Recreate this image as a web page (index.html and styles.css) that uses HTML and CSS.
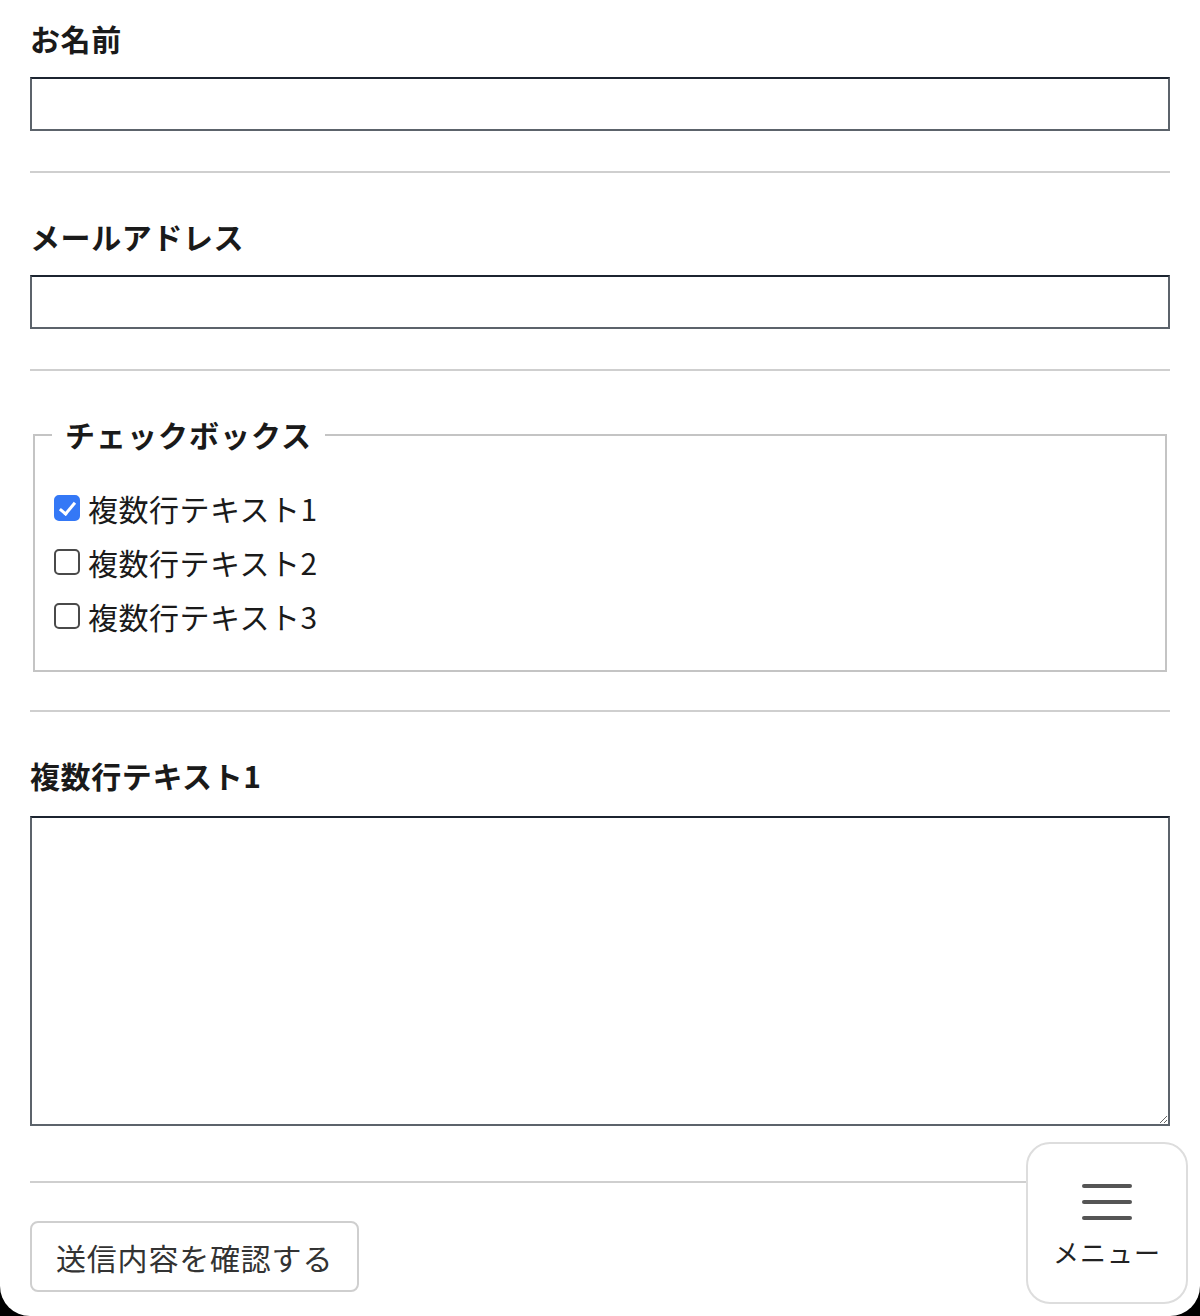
FILE: index.html
```html
<!DOCTYPE html>
<html lang="ja">
<head>
    <meta charset="UTF-8">
    <meta name="viewport" content="width=device-width, initial-scale=1.0">
    <title>お問い合わせ</title>
    <link rel="stylesheet" href="styles.css">
</head>
<body>
    <div class="page">
        <form class="contact-form">
            <div class="field">
                <label class="field-label" for="name">お名前</label>
                <input class="text-input" id="name" type="text">
            </div>
            <hr class="divider">
            <div class="field">
                <label class="field-label" for="mail">メールアドレス</label>
                <input class="text-input" id="mail" type="email">
            </div>
            <hr class="divider">
            <fieldset class="check-group">
                <legend>チェックボックス</legend>
                <label class="check-row"><input type="checkbox" checked> 複数行テキスト1</label>
                <label class="check-row"><input type="checkbox"> 複数行テキスト2</label>
                <label class="check-row"><input type="checkbox"> 複数行テキスト3</label>
            </fieldset>
            <hr class="divider after-group">
            <div class="field">
                <label class="field-label" for="body">複数行テキスト1</label>
                <textarea class="text-area" id="body"></textarea>
            </div>
            <hr class="divider before-submit">
            <button type="button" class="confirm-button">送信内容を確認する</button>
        </form>
    </div>
    <!-- floating menu -->
    <button type="button" class="menu-button">
        <span class="menu-icon">
            <span></span>
            <span></span>
            <span></span>
        </span>
        <span class="menu-text">メニュー</span>
    </button>
</body>
</html>
```

FILE: styles.css
```css
html{
    background-color: black;
}
body{
    margin: 0;
    font-family: "Noto Sans CJK JP", "Noto Sans", sans-serif;
    color: #1a1a1a;
}
.page{
    background-color: white;
    min-height: 1316px;
    border-radius: 0 0 30px 30px;
    box-sizing: border-box;
    padding: 16px 30px 0;
}
.contact-form{
    display: flex;
    flex-direction: column;
}
.field{
    display: flex;
    flex-direction: column;
}
.field-label{
    font-size: 30px;
    font-weight: 700;
    line-height: 45px;
    margin-bottom: 16px;
    letter-spacing: 0.6px;
}
.text-input,.text-area{
    display: block;
    box-sizing: border-box;
    width: 100%;
    border: 2px solid #5c636b;
    border-top-color: #1c2430;
    border-radius: 0;
    background-color: white;
    font-family: inherit;
    font-size: 30px;
}
.text-input{
    height: 54px;
}
.text-area{
    height: 310px;
    resize: vertical;
    margin-top: 2px;
    margin-bottom: 15px;
}
.divider{
    border: none;
    border-top: 2px solid #cfcfcf;
    margin: 40px 0 41px;
    height: 0;
}
.divider.after-group{
    margin-top: 38px;
}
.divider.before-submit{
    margin-bottom: 38px;
}
.check-group{
    margin: 0 3px;
    border: 2px solid #c4c4c4;
    padding: 0 19px 27px;
    display: flex;
    flex-direction: column;
}
.check-group legend{
    font-size: 30px;
    font-weight: 700;
    line-height: 45px;
    padding: 0 13px;
    margin-left: -2px;
    margin-bottom: 24px;
    letter-spacing: 1px;
}
.check-row{
    display: flex;
    align-items: center;
    gap: 8px;
    height: 54px;
    font-size: 30px;
    letter-spacing: 0.5px;
    color: #1a1a1a;
}
.check-row input{
    appearance: none;
    position: relative;
    box-sizing: border-box;
    width: 26px;
    height: 26px;
    margin: 0;
    border: 2px solid #4a4a4a;
    border-radius: 5px;
    background-color: white;
}
.check-row input:checked{
    background-color: #3478f6;
    border-color: #3478f6;
}
.check-row input:checked::after{
    content: "";
    position: absolute;
    left: 7px;
    top: 2px;
    width: 6px;
    height: 13px;
    border: solid white;
    border-width: 0 3px 3px 0;
    transform: rotate(40deg);
}
.confirm-button{
    align-self: flex-start;
    height: 71px;
    padding: 0 24px;
    background-color: white;
    border: 2px solid #cfcfcf;
    border-radius: 8px;
    font-family: inherit;
    font-size: 30px;
    letter-spacing: 0.8px;
    color: #333;
    cursor: pointer;
}
.menu-button{
    position: fixed;
    right: 12px;
    bottom: 12px;
    width: 162px;
    height: 162px;
    box-sizing: border-box;
    background-color: white;
    border: 2px solid #dddddd;
    border-radius: 24px;
    display: flex;
    flex-direction: column;
    align-items: center;
    justify-content: center;
    gap: 14px;
    padding: 8px 0 0;
    cursor: pointer;
    font-family: inherit;
}
.menu-icon{
    display: flex;
    flex-direction: column;
    gap: 12px;
}
.menu-icon span{
    display: block;
    width: 50px;
    height: 4px;
    border-radius: 2px;
    background-color: #555;
}
.menu-text{
    font-size: 26px;
    color: #222;
    line-height: 36px;
    letter-spacing: 1px;
}
```
